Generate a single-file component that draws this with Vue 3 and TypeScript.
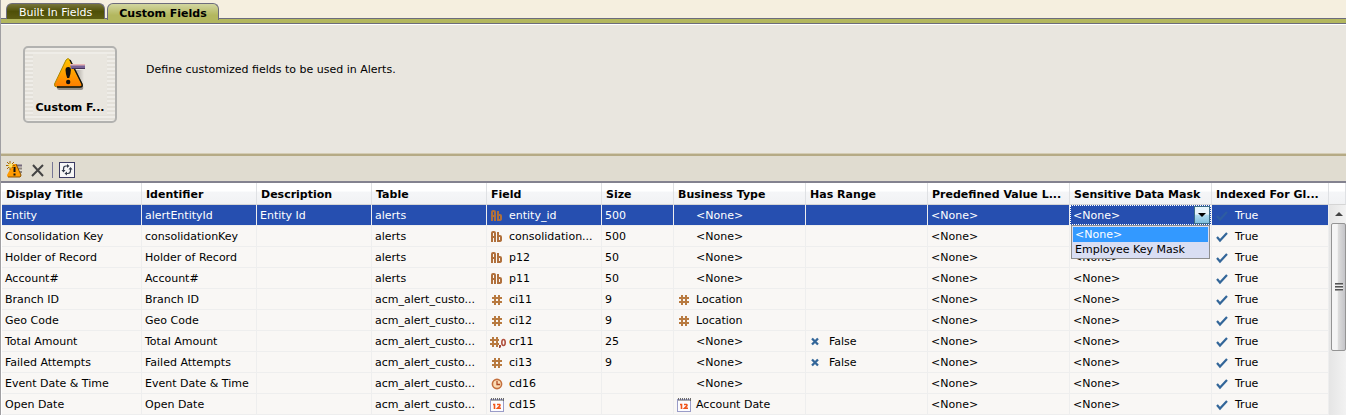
<script setup lang="ts">
import { ref } from 'vue'

type FieldIcon = 'text' | 'number' | 'decimal' | 'time' | 'date'

interface FieldRow {
  title: string
  identifier: string
  description: string
  table: string
  icon: FieldIcon
  field: string
  size: string
  typeIcon: FieldIcon | ''
  type: string
  range: string
}

const columns = [
  { name: 'Display Title', width: 140 },
  { name: 'Identifier', width: 115 },
  { name: 'Description', width: 115 },
  { name: 'Table', width: 115 },
  { name: 'Field', width: 115 },
  { name: 'Size', width: 72 },
  { name: 'Business Type', width: 132 },
  { name: 'Has Range', width: 122 },
  { name: 'Predefined Value L...', width: 142 },
  { name: 'Sensitive Data Mask', width: 142 },
  { name: 'Indexed For Gl...', width: 117 },
]

const none = '<None>'

function row(
  title: string, identifier: string, description: string, table: string,
  icon: FieldIcon, field: string, size: string,
  typeIcon: FieldIcon | '' = '', type = none, range = '',
): FieldRow {
  return { title, identifier, description, table, icon, field, size, typeIcon, type, range }
}

const rows: FieldRow[] = [
  row('Entity', 'alertEntityId', 'Entity Id', 'alerts', 'text', 'entity_id', '500'),
  row('Consolidation Key', 'consolidationKey', '', 'alerts', 'text', 'consolidation...', '500'),
  row('Holder of Record', 'Holder of Record', '', 'alerts', 'text', 'p12', '50'),
  row('Account#', 'Account#', '', 'alerts', 'text', 'p11', '50'),
  row('Branch ID', 'Branch ID', '', 'acm_alert_custo...', 'number', 'ci11', '9', 'number', 'Location'),
  row('Geo Code', 'Geo Code', '', 'acm_alert_custo...', 'number', 'ci12', '9', 'number', 'Location'),
  row('Total Amount', 'Total Amount', '', 'acm_alert_custo...', 'decimal', 'cr11', '25', '', none, 'False'),
  row('Failed Attempts', 'Failed Attempts', '', 'acm_alert_custo...', 'number', 'ci13', '9', '', none, 'False'),
  row('Event Date & Time', 'Event Date & Time', '', 'acm_alert_custo...', 'time', 'cd16', ''),
  row('Open Date', 'Open Date', '', 'acm_alert_custo...', 'date', 'cd15', '', 'date', 'Account Date'),
]

const maskOptions = [none, 'Employee Key Mask']
const mask = ref(none)
const selected = ref(0)
</script>

<template>
  <main class="page">
    <svg class="defs" aria-hidden="true">
      <defs>
        <linearGradient id="warn" x1="0" y1="0" x2="0" y2="1">
          <stop offset="0" stop-color="#ffc400" />
          <stop offset="1" stop-color="#ff7d00" />
        </linearGradient>
        <linearGradient id="shade" x1="0" y1="0" x2="1" y2="0">
          <stop offset="0" stop-color="#55504c" />
          <stop offset="1" stop-color="#55504c" stop-opacity="0" />
        </linearGradient>
        <symbol id="i-text" viewBox="0 0 16 16">
          <g fill="none" stroke="#b0703c" stroke-width="2">
            <path d="M2 13V4q0-1 1-1h1q1 0 1 1v9M2 8h3M8 3v9h1q2 0 2-1V8q0-1-1-1H8" />
          </g>
        </symbol>
        <symbol id="i-number" viewBox="0 0 16 16">
          <path d="M5 3v10M9 3v10M2 6h10M2 10h10" fill="none" stroke="#b87a40" stroke-width="2" />
        </symbol>
        <symbol id="i-decimal" viewBox="0 0 16 16">
          <path d="M3 3v10M7 3v10M0 6h9M0 10h9" fill="none" stroke="#b87a40" stroke-width="2" />
          <path d="M9 11h2v2l-1 1H9z" fill="#a04a3c" />
          <ellipse cx="13.500" cy="8.500" rx="1.700" ry="3" fill="none" stroke="#b0503e" stroke-width="1.600" />
        </symbol>
        <symbol id="i-time" viewBox="0 0 16 16">
          <circle cx="7" cy="8" r="4.600" fill="#fbdcb4" stroke="#c4703e" stroke-width="1.600" />
          <path d="M7 5v3.500h3" fill="none" stroke="#b04a24" stroke-width="1.300" />
        </symbol>
        <symbol id="i-date" viewBox="0 0 16 16">
          <rect x=".5" y="2.500" width="13" height="12" fill="#fcfcff" stroke="#9a9cc8" />
          <path d="M1 2.500h13" stroke="#6b6b6b" stroke-width="3" stroke-dasharray="1 1" />
          <path d="M1 3.500h12" stroke="#aaa" />
          <path d="M3 7.500h1.500V12M7 7.500h2.500q1 .5 0 1.700L7.500 11.300h3.500" fill="none" stroke="#f0561c" stroke-width="1.600" />
        </symbol>
        <symbol id="i-check" viewBox="0 0 12 12">
          <path d="M1 6l3 3.500L11 2" fill="none" stroke="#336699" stroke-width="2.200" />
        </symbol>
        <symbol id="i-cross" viewBox="0 0 12 12">
          <path d="M2 2.500l6 6M8 2.500l-6 6" fill="none" stroke="#336699" stroke-width="2.300" />
        </symbol>
      </defs>
    </svg>

    <nav class="tabs" role="tablist">
      <button class="tab" role="tab" aria-selected="false">Built In Fields</button>
      <button class="tab active" role="tab" aria-selected="true">Custom Fields</button>
    </nav>

    <section class="intro">
      <button class="tile">
        <svg class="tile-icon" viewBox="0 0 34 36" aria-hidden="true">
          <path d="M18 13h13v17h-5z" fill="url(#shade)" opacity=".7" />
          <path d="M4 32L15 6q1.500-2 3 0l12 23q1 4-2 4H6z" fill="#77726b" opacity=".75" />
          <path d="M1.500 27L13 3q2-3 4 0l12 24q1 3-2 3H4q-3 0-2.500-3z" fill="url(#warn)" stroke="#a98a00" />
          <path d="M17 3l12 24q1 3-2 3H4" fill="none" stroke="#111" stroke-width="1.400" />
          <path d="M12.500 13q0-3 2.700-3t2.700 3q0 3-1.700 8h-2q-1.700-5-1.700-8z" fill="#111" />
          <circle cx="15.200" cy="25" r="2.200" fill="#111" />
          <path d="M17 7h15v5H18z" fill="#776196" />
          <path d="M17 7h15v1.500H17z" fill="#e6b4b4" />
          <path d="M19 11.500h13" stroke="#443459" />
        </svg>
        <span>Custom F...</span>
      </button>
      <p>Define customized fields to be used in Alerts.</p>
    </section>

    <div class="toolbar" role="toolbar" aria-label="Field actions">
      <button aria-label="New field">
        <svg width="18" height="18" viewBox="0 0 18 18" aria-hidden="true">
          <path d="M10 4.500h6" stroke="#75697c" stroke-width="2" />
          <path d="M12 7.500h4M14 11h2" stroke="#8d8580" stroke-width="2" />
          <path d="M7 3h3l5 11q0 2-1 2H2q-1 0-1-2z" fill="#ff9a00" />
          <path d="M10 3l5 11q0 1-1 2H2" fill="none" stroke="#8a5200" />
          <path d="M8.500 6v5M8.500 12.500v2" stroke="#111" stroke-width="2" />
          <path d="M4 0v9M0 4.500h9M1 1l7 7M8 1L1 8" stroke="#a76a00" />
          <circle cx="4.500" cy="4.500" r="2" fill="#ffe566" />
        </svg>
      </button>
      <button aria-label="Delete field">
        <svg width="16" height="16" viewBox="0 0 16 16" aria-hidden="true">
          <path d="M3 3l10 11M13 3L2 14" fill="none" stroke="#444" stroke-width="2" />
        </svg>
      </button>
      <i class="separator"></i>
      <button class="refresh" aria-label="Refresh">
        <svg width="14" height="14" viewBox="0 0 14 14" aria-hidden="true">
          <path d="M8 3H6Q3.500 3 3.500 6v2M6 10.500h2q2.500 0 2.500-3V5.500" fill="none" stroke="#333b4c" stroke-width="1.200" />
          <path d="M1.500 7h4l-2 2.500zM8.500 6.500h4l-2-2.500zM7 1l2.500 2L7 5zM7 8.500v4l-2.500-2z" fill="#333b4c" />
        </svg>
      </button>
    </div>

    <div class="grid">
      <table>
        <colgroup>
          <col v-for="c in columns" :key="c.name" :style="{ width: c.width + 'px' }" />
        </colgroup>
        <thead>
          <tr>
            <th v-for="c in columns" :key="c.name" scope="col">{{ c.name }}</th>
          </tr>
        </thead>
        <tbody>
          <tr v-for="(r, i) in rows" :key="r.title" :class="{ selected: i === selected }">
            <td>{{ r.title }}</td>
            <td>{{ r.identifier }}</td>
            <td>{{ r.description }}</td>
            <td>{{ r.table }}</td>
            <td>
              <span class="with-icon">
                <svg class="icon" aria-hidden="true"><use :href="'#i-' + r.icon" /></svg>{{ r.field }}
              </span>
            </td>
            <td>{{ r.size }}</td>
            <td>
              <span class="with-icon">
                <svg class="icon" aria-hidden="true"><use v-if="r.typeIcon" :href="'#i-' + r.typeIcon" /></svg>{{ r.type }}
              </span>
            </td>
            <td>
              <span v-if="r.range" class="flag">
                <svg class="mark" aria-hidden="true"><use href="#i-cross" /></svg>{{ r.range }}
              </span>
            </td>
            <td>{{ none }}</td>
            <td v-if="i === selected" class="editor">
              <div class="combo">
                <select v-model="mask" aria-label="Sensitive Data Mask">
                  <option v-for="o in maskOptions" :key="o">{{ o }}</option>
                </select>
                <span class="arrow" aria-hidden="true"></span>
              </div>
              <ul class="options" role="listbox" aria-label="Sensitive Data Mask options">
                <li
                  v-for="o in maskOptions" :key="o" role="option"
                  :aria-selected="o === mask" :class="{ current: o === mask }" @click="mask = o"
                >{{ o }}</li>
              </ul>
            </td>
            <td v-else>{{ none }}</td>
            <td>
              <span class="flag">
                <svg class="mark" aria-hidden="true"><use href="#i-check" /></svg>True
              </span>
            </td>
          </tr>
        </tbody>
      </table>
      <div class="side">
        <div class="cap"></div>
        <div class="scrollbar">
          <button class="up" aria-label="Scroll up"></button>
          <div class="thumb"><i class="grip"></i></div>
        </div>
      </div>
    </div>
  </main>
</template>

<style>
body {
  background: #e9e6df;
}
</style>

<style scoped>
.page {
  border-left: 1px solid #a09fa2;
  font: 11px/14px Verdana, "DejaVu Sans", sans-serif;
  color: #000;
}
.defs {
  position: absolute;
  width: 0;
  height: 0;
}
button {
  font: inherit;
  color: inherit;
  padding: 0;
  border: 0;
  background: none;
}
.tabs {
  display: flex;
  align-items: flex-end;
  gap: 2px;
  height: 24px;
  box-sizing: border-box;
  padding: 0 5px;
  background: linear-gradient(#f5efdf 0 18px, #6c6c7c 18px 19px, #b3b75e 19px 23px, #6c6c7c 23px);
}
.tab {
  height: 16px;
  margin-bottom: 5px;
  padding: 2px 12px 0;
  border: 1px solid #6d6c7c;
  border-bottom: 0;
  border-radius: 6px 6px 0 0;
  background: linear-gradient(#77753a, #4f5007 50%, #5c5c12);
  color: #fff;
  line-height: 13px;
}
.tab.active {
  margin-bottom: 4px;
  height: 17px;
  padding: 2px 11px 0;
  background: linear-gradient(#d2d6a0, #b3b75e 70%);
  color: #000;
  font-weight: bold;
}
.intro {
  display: flex;
  align-items: flex-start;
  gap: 29px;
  height: 129px;
  padding: 21px 22px 0;
  box-sizing: border-box;
  border-top: 1px solid #fff;
}
.tile {
  display: flex;
  flex-direction: column;
  align-items: center;
  width: 94px;
  height: 77px;
  padding-top: 9px;
  box-sizing: border-box;
  border: 2px solid #b2b2b0;
  border-radius: 5px;
  background:
    linear-gradient(#e9e6df, #e9e6df) center / 74px 61px no-repeat,
    repeating-linear-gradient(#efede8 0 2px, #e4e1da 2px 4px);
  font-weight: bold;
}
.tile-icon {
  width: 34px;
  height: 36px;
  margin-bottom: 8px;
}
.intro p {
  margin: 17px 0 0;
}
.toolbar {
  display: flex;
  align-items: center;
  gap: 6px;
  height: 30px;
  padding: 5px 5px 0;
  box-sizing: border-box;
  border-bottom: 2px solid #83828f;
  background: linear-gradient(#d4ccb4 0 1px, #b5aa85 1px 3px, #e0dcd0 3px);
}
.toolbar button {
  display: flex;
}
.separator {
  width: 1px;
  height: 16px;
  background: #777796;
}
.toolbar .refresh {
  border: 1px solid #3c3c64;
  background: #f7f7f7;
}
.grid {
  display: flex;
}
table {
  flex: 1;
  width: 0;
  table-layout: fixed;
  border-collapse: separate;
  border-spacing: 0;
  border-left: 1px solid #fff;
  background: #f9f7f5;
}
th,
td {
  box-sizing: border-box;
  height: 21px;
  padding: 2px 3px 0;
  border-right: 1px solid #eee;
  border-bottom: 1px solid #eee;
  text-align: left;
  white-space: nowrap;
}
th {
  height: 22px;
  padding: 2px 4px 0;
  border-right-color: #dfe1e4;
  border-bottom-color: #d5d5d5;
  background: linear-gradient(#fff 0 40%, #f5f6f8 41%, #f1f2f4);
}
.selected td {
  background: #264fb0;
  color: #fff;
}
.with-icon,
.flag {
  display: flex;
  align-items: center;
  gap: 3px;
}
.icon {
  width: 16px;
  height: 16px;
}
.flag {
  gap: 7px;
  padding-left: 1px;
}
.mark {
  width: 12px;
  height: 12px;
}
.selected .mark {
  opacity: 0.6;
}
td.editor {
  position: relative;
  padding: 0;
}
.combo {
  display: flex;
  height: 20px;
  box-sizing: border-box;
  border: 1px dotted #fff;
}
select {
  flex: 1;
  min-width: 0;
  padding: 2px 2px 0;
  border: 0;
  outline: 0;
  appearance: none;
  background: none;
  color: inherit;
  font: inherit;
}
.arrow {
  display: flex;
  align-items: center;
  justify-content: center;
  width: 14px;
  border: 1px solid #3c6c86;
  background: linear-gradient(#e6f4fb 0 45%, #b0dcf0 50%, #7fc0df);
}
.arrow::before {
  content: "";
  border: 4px solid transparent;
  border-top-color: #000;
  border-bottom: 0;
}
.options {
  position: absolute;
  z-index: 2;
  top: 20px;
  left: 1px;
  right: 1px;
  margin: 0;
  padding: 1px;
  border: 1px solid #8f8f8f;
  background: #d9def3;
  color: #000;
  list-style: none;
}
.options li {
  height: 15px;
  padding: 0 2px;
  line-height: 15px;
}
.options .current {
  background: #3399ff;
  color: #fff;
}
.side {
  display: flex;
  flex-direction: column;
  width: 17px;
}
.cap {
  height: 21px;
  border-right: 1px solid #dfe1e4;
  border-bottom: 1px solid #d5d5d5;
  background: linear-gradient(#fff 0 40%, #f5f6f8 41%, #f1f2f4);
}
.scrollbar {
  flex: 1;
  padding-left: 2px;
  background: linear-gradient(90deg, #e5e5e5, #f2f2f2);
}
.up {
  display: flex;
  align-items: center;
  justify-content: center;
  width: 100%;
  height: 18px;
}
.up::before {
  content: "";
  border: 4px solid transparent;
  border-bottom-color: #444;
  border-top: 0;
}
.thumb {
  display: flex;
  align-items: center;
  justify-content: center;
  height: 61%;
  border: 1px solid #949494;
  border-radius: 2px;
  background: linear-gradient(90deg, #f5f5f5 0 40%, #dcdcdc 50%, #c4c4c8);
  box-sizing: border-box;
}
.grip {
  width: 8px;
  height: 8px;
  background: repeating-linear-gradient(#555 0 1px, #999 1px 2px, #eee 2px 3px);
}
</style>
